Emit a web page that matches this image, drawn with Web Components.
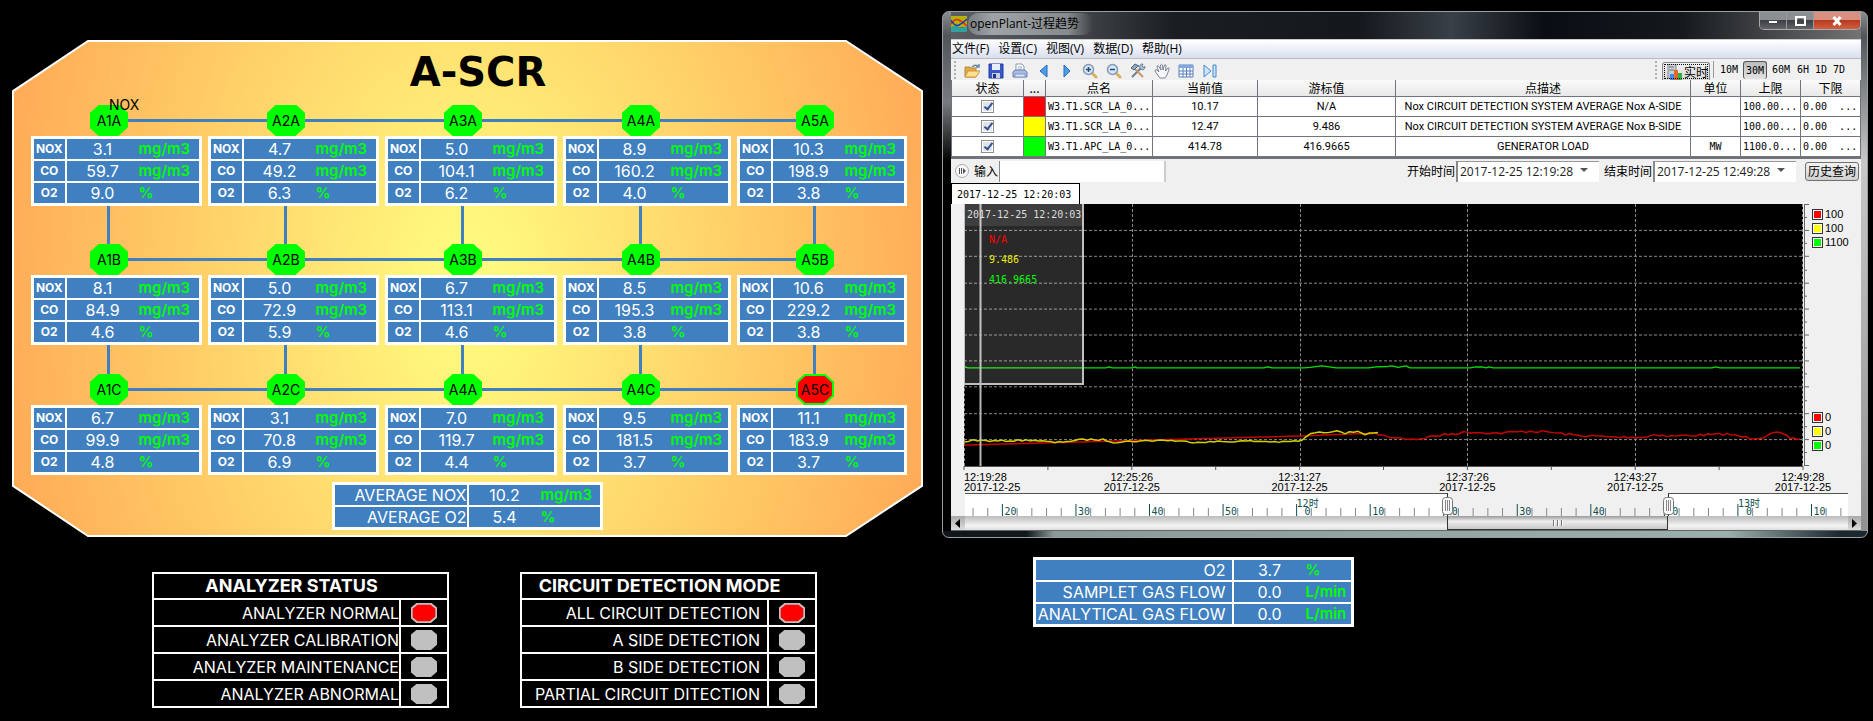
<!DOCTYPE html>
<html lang="zh-CN">
<head>
<meta charset="utf-8">
<title>A-SCR</title>
<style>
html, body { margin: 0; background: #000; }
body { min-height: 100vh; font-family: "Liberation Sans", "Noto Sans CJK SC", sans-serif; }
</style>
</head>
<body>
<scr-dashboard></scr-dashboard>

<script>
const define = (name, html, setup) => {
  const tpl = document.createElement('template');
  tpl.innerHTML = html;
  customElements.define(name, class extends HTMLElement {
    constructor() {
      super();
      this.attachShadow({ mode: 'open' }).append(tpl.content.cloneNode(true));
    }
    connectedCallback() {
      if (setup && !this.ready) { this.ready = true; setup(this, this.shadowRoot); }
    }
  });
};

/* Blue table of label / value / unit rows; rows="label|value|unit;..." */
define('reading-table', `
<style>
:host { display: block; --label: 33px; --value: 73px; --pad: 0px; --label-font: bold 12px Inter, sans-serif; --align: center; --row: 20px; }
table { width: 100%; border-collapse: collapse; table-layout: fixed; background: #4080c0; border: 3px solid #fff; color: #fff; font: 16px/20px Inter, sans-serif; }
col.l { width: var(--label); } col.v { width: var(--value); }
tr + tr { border-top: 2px solid #fff; }
th, td { padding: 0; height: var(--row); white-space: nowrap; }
th { font: var(--label-font); line-height: 20px; text-align: var(--align); padding-right: var(--pad); border-right: 2px solid #fff; }
.v { text-align: center; }
.u { text-align: left; color: #0f0; font-weight: 600; font-size: 15px; }
</style>
<table><colgroup><col class="l"><col class="v"><col></colgroup><tbody></tbody></table>`,
(el, root) => {
  root.querySelector('tbody').innerHTML = el.getAttribute('rows').split(';').map(r => {
    const [l, v, u] = r.split('|');
    return `<tr><th scope="row">${l}</th><td class="v">${v}</td><td class="u">${u}</td></tr>`;
  }).join('');
});

/* Octagonal marker: sampling point or lamp */
define('octagon-mark', `
<style>
:host { display: block; position: relative; }
svg { position: absolute; inset: 0; width: 100%; height: 100%; }
span { position: relative; display: block; text-align: center; }
polygon { fill: var(--fill); stroke: var(--edge, var(--fill)); stroke-width: 2; vector-effect: non-scaling-stroke; }
</style>
<svg viewBox="0 0 38 30" preserveAspectRatio="none"><polygon points="9,1 29,1 37,8 37,21 28,29 9,29 1,22 1,8"/></svg>
<span><slot></slot></span>`);

define('sample-station', `
<style>
:host { display: block; position: relative; }
.across, .down { position: absolute; background: #4080c0; }
.across { left: 78px; right: -84px; top: 14px; height: 3px; }
:host([last]) .across { display: none; }
.down { left: 76px; width: 3px; top: 16px; bottom: calc(-1 * var(--drop, 0px)); }
octagon-mark { width: 38px; margin-left: 59px; height: 31px; --fill: #0f0; font: 14px/31px Inter, sans-serif; color: #000; }
:host([alarm]) octagon-mark { --fill: #f00; --edge: #0f0; }
reading-table { position: relative; }
</style>
<div class="across"></div><div class="down"></div>
<octagon-mark><slot></slot></octagon-mark>`,
(el, root) => {
  const table = document.createElement('reading-table');
  table.setAttribute('rows', el.getAttribute('rows'));
  root.append(table);
});

define('scr-panel', `
<style>
:host { display: block; position: relative; padding: 12px 16px 7px 19px; }
.bg { position: absolute; inset: 0; width: 100%; height: 100%; }
h1 { position: relative; margin: 0 0 13px; padding-left: 18px; text-align: center; font: bold 40px/40px "DejaVu Sans", sans-serif; color: #000; }
.row { position: relative; display: grid; grid-template-columns: 171fr 171fr 172fr 168fr 170fr; column-gap: 6px; }
.row + .row { margin-top: 38px; }
.row + .row.third { margin-top: 29px; }
.first { --drop: 38px; } .second { --drop: 29px; }
.tag { position: absolute; left: 97px; top: 56px; font: 14px/18px Inter, sans-serif; }
.avg { position: relative; width: 271px; margin: 7px 304px 0 auto; --label: 134px; --pad: 0px; --label-font: 16px Inter, sans-serif; --align: right; --row: 20px; }
</style>
<svg class="bg" viewBox="0 0 911 496" preserveAspectRatio="none">
<defs><radialGradient id="g" gradientUnits="userSpaceOnUse" cx="0" cy="0" r="490" gradientTransform="translate(455 248) scale(1 1.5)">
<stop offset="0" stop-color="#ffff80"/><stop offset="1" stop-color="#ffa855"/></radialGradient></defs>
<polygon points="76,1 834,1 910,51 910,445 834,495 76,495 1,445 1,51" fill="url(#g)" stroke="#fff" stroke-width="2" vector-effect="non-scaling-stroke"/>
</svg>
<h1>A-SCR</h1>
<div class="row first"></div><div class="row second"></div><div class="row third"></div>
<div class="tag">NOX</div>
<reading-table class="avg" rows="AVERAGE NOX|10.2|mg/m3;AVERAGE O2|5.4|%"></reading-table>`,
(el, root) => {
  const data = [
    [['A1A', 3.1, 59.7, 9.0], ['A2A', 4.7, 49.2, 6.3], ['A3A', 5.0, 104.1, 6.2], ['A4A', 8.9, 160.2, 4.0], ['A5A', 10.3, 198.9, 3.8]],
    [['A1B', 8.1, 84.9, 4.6], ['A2B', 5.0, 72.9, 5.9], ['A3B', 6.7, 113.1, 4.6], ['A4B', 8.5, 195.3, 3.8], ['A5B', 10.6, 229.2, 3.8]],
    [['A1C', 6.7, 99.9, 4.8], ['A2C', 3.1, 70.8, 6.9], ['A4A', 7.0, 119.7, 4.4], ['A4C', 9.5, 181.5, 3.7], ['A5C', 11.1, 183.9, 3.7]]];
  root.querySelectorAll('.row').forEach((row, i) => {
    row.innerHTML = data[i].map(([n, a, b, c], j) =>
      `<sample-station ${j === 4 ? 'last' : ''} ${n === 'A5C' ? 'alarm' : ''} rows="NOX|${a.toFixed(1)}|mg/m3;CO|${b.toFixed(1)}|mg/m3;O2|${c.toFixed(1)}|%">${n}</sample-station>`).join('');
  });
});

define('status-table', `
<style>
:host { display: block; width: 297px; }
table { width: 100%; border-collapse: collapse; table-layout: fixed; border: 2px solid #fff; color: #fff; font: 16px/20px Inter, sans-serif; }
col.m { width: 48px; }
tr { border-bottom: 2px solid #fff; }
th, td { height: 25px; padding: 0; white-space: nowrap; }
thead th { font-size: 18px; font-weight: 700; text-align: center; padding-right: 18px; height: 24px; }
tbody th { font-weight: 400; text-align: right; padding-right: var(--pad, 0px); border-right: 2px solid #fff; }
octagon-mark { width: 26px; height: 20px; margin: 0 auto; --fill: #c0c0c0; }
octagon-mark[on] { --fill: #f00; --edge: #c0c0c0; }
</style>
<table><colgroup><col><col class="m"></colgroup><thead><tr><th colspan="2"></th></tr></thead><tbody></tbody></table>`,
(el, root) => {
  root.querySelector('thead th').textContent = el.getAttribute('heading');
  root.querySelector('tbody').innerHTML = el.getAttribute('items').split(';').map((t, i) =>
    `<tr><th scope="row">${t}</th><td><octagon-mark ${i ? '' : 'on'}></octagon-mark></td></tr>`).join('');
});

define('trend-toolbar', `
<style>
:host { display: flex; align-items: center; height: 21px; background: #f0f0f0; padding-left: 3px; overflow: hidden; }
.grip { width: 2px; height: 18px; background: repeating-linear-gradient(#b0b0b0 0 2px, transparent 2px 4px); margin-right: 8px; }
button { border: 0; padding: 0; margin: 0 8px 0 0; width: 16px; height: 18px; background: none; flex: none; }
button.n { width: 15px; }
svg { display: block; width: 16px; height: 16px; margin-top: 2px; }
.right { margin-left: auto; display: flex; align-items: center; padding-right: 12px; }
.right .grip { margin-right: 5px; }
.live { display: flex; align-items: center; width: 48px; height: 19px; margin: 3px 3px 0 0; border: 1px solid #888; border-bottom: 0; border-radius: 3px 3px 0 0; background: linear-gradient(#f4f4f4, #d4d4d4); outline: 1px dotted #000; outline-offset: -3px; font: 12px/18px "Noto Sans CJK SC", sans-serif; padding-left: 3px; gap: 2px; white-space: nowrap; color: #000; }
.live svg { margin: 0; flex: none; }
.range { width: 24px; height: 18px; margin: 1px 2px 0 0; font: 10px/18px "DejaVu Sans Mono", monospace; color: #000; }
.range.s { width: 16px; }
.range.on { border: 1px solid #555; border-bottom: 0; border-radius: 3px; background: linear-gradient(#bbb, #e4e4e4); }
.bar { width: 1px; height: 17px; background: #999; margin-right: 3px; }
</style>
<div class="grip"></div>
<button aria-label="打开"><svg viewBox="0 0 16 16"><path d="M1 4h5l1 1h5v9H1z" fill="#e0a848" stroke="#b88838"/><path d="M4 8h12l-4 6H1z" fill="#ffe090" stroke="#c89840"/><path d="M8 4q3-3 6-1M15 1v3h-3" fill="none" stroke="#6888a8" stroke-width="1.500"/></svg></button>
<button aria-label="保存"><svg viewBox="0 0 16 16"><path d="M1 1h14v14H1z" fill="#3858c8" stroke="#2038a0"/><path d="M4 1h8v6H4z" fill="#e8eeff"/><path d="M4 10h8v5H4z" fill="#c8d0e0"/><path d="M5 11h3v4H5z" fill="#203080"/></svg></button>
<button aria-label="打印"><svg viewBox="0 0 16 16"><path d="M4 1h6l2 2v5H4z" fill="#fff" stroke="#8898b8"/><path d="M6 4h4M6 6h4" stroke="#90a8d0"/><path d="M1 9l2-2h10l2 2v5H1z" fill="#a8bce0" stroke="#6880b0"/><path d="M3 11h10v3H3z" fill="#d8e4fa" stroke="#8098c8"/></svg></button>
<button class="n" aria-label="后退"><svg viewBox="0 0 16 16"><path d="M11 2v12L4 8z" fill="#4c9ee8" stroke="#2868c0"/></svg></button>
<button class="n" aria-label="前进"><svg viewBox="0 0 16 16"><path d="M5 2v12l6-6z" fill="#4c9ee8" stroke="#2868c0"/></svg></button>
<button aria-label="放大"><svg viewBox="0 0 16 16"><path d="M10 10l4 4" stroke="#d8b060" stroke-width="3" stroke-linecap="round"/><circle cx="6.500" cy="6.500" r="5" fill="#d0e8ff" stroke="#8898b0" stroke-width="1.500"/><path d="M4 6.500h5M6.500 4v5" stroke="#304870" stroke-width="1.500"/></svg></button>
<button aria-label="缩小"><svg viewBox="0 0 16 16"><path d="M10 10l4 4" stroke="#d8b060" stroke-width="3" stroke-linecap="round"/><circle cx="6.500" cy="6.500" r="5" fill="#d0e8ff" stroke="#8898b0" stroke-width="1.500"/><path d="M4 6.500h5" stroke="#304870" stroke-width="1.500"/></svg></button>
<button aria-label="工具"><svg viewBox="0 0 16 16"><path d="M2 14L12 4" stroke="#6a8098" stroke-width="2"/><path d="M4 5l9 9" stroke="#c89868" stroke-width="2"/><path d="M1 5l4-4 4 2-2 1-3 3z" fill="#90a8c0" stroke="#506880"/><path d="M10 5q-1-4 3-4l-1 2 1 1.500 2-1q0 4-4 3z" fill="#b8cce0" stroke="#506880" stroke-width=".8"/></svg></button>
<button aria-label="平移"><svg viewBox="0 0 16 16"><path d="M5 14L1 8q0-2 2-1l2 2L3 4q0-2 1.500-1L7 7 6.500 2q1-1.500 2 0L9 7l1.500-5q1.500-1 1.500 1L11.500 8 14 5q1.500-.5 1 1.500L13 12l-2 3H6z" fill="#f8f8fc" stroke="#707890" stroke-width=".9"/></svg></button>
<button aria-label="表格"><svg viewBox="0 0 16 16"><path d="M1 2h14v12H1z" fill="#fff" stroke="#5880b8"/><path d="M1 2h14v3H1z" fill="#80a8e0"/><path d="M1 8h14M1 11h14M5 5v9M8.500 5v9M12 5v9" stroke="#5880c0"/></svg></button>
<button aria-label="末尾"><svg viewBox="0 0 16 16"><path d="M2 2v12l7-6z" fill="#c8e4ff" stroke="#4888c8"/><path d="M11 2h3v12h-3z" fill="#c8e4ff" stroke="#4888c8"/></svg></button>
<div class="right">
<div class="grip"></div>
<button class="live"><svg viewBox="0 0 16 16"><path d="M2 0h8v14H2z" fill="#c8ccd4" stroke="#888"/><path d="M3 3h5M3 6h5" stroke="#777"/><path d="M4 10h4v6H4z" fill="#3c8ce8"/><path d="M8 6h4v10H8z" fill="#e86828"/><path d="M12 9h4v7h-4z" fill="#30b040"/></svg>实时</button>
<div class="bar"></div>
<button class="range">10M</button><button class="range on">30M</button><button class="range">60M</button><button class="range s">6H</button><button class="range s">1D</button><button class="range s">7D</button>
</div>`);

define('point-grid', `
<style>
:host { display: block; background: #fff; border-bottom: 2px solid #707478; }
table { width: 100%; table-layout: fixed; border-collapse: collapse; font: 11px/18px Roboto, sans-serif; color: #000; }
th, td { padding: 0; border: 1px solid #70747c; text-align: center; white-space: nowrap; overflow: hidden; height: 19px; line-height: 18px; }
th { height: 16px; line-height: 16px; border-top: 0; background: linear-gradient(#fafafa, #e8e8e8); font: 12px/16px "Noto Sans CJK SC", sans-serif; }
.m { font: 10px/18px "DejaVu Sans Mono", monospace; text-align: left; padding-left: 2px; }
td.u { text-align: center; padding: 0; }
td.c { background: var(--c); }
pre { margin: 0; font: inherit; }
input { appearance: none; display: block; position: relative; width: 13px; height: 13px; margin: 0 auto; border: 1px solid #8e8f8f; box-shadow: inset 0 0 0 1px #fff; background: #dfe4ea; }
input:checked::before { content: ""; position: absolute; left: 4px; top: 0; width: 3px; height: 7px; border: solid #39508c; border-width: 0 2px 2px 0; transform: rotate(38deg); }
</style>
<table><colgroup><col style="width:72px"><col style="width:22px"><col style="width:107px"><col style="width:105px"><col style="width:138px"><col><col style="width:50px"><col style="width:60px"><col style="width:60px"></colgroup>
<thead><tr><th>状态</th><th>...</th><th>点名</th><th>当前值</th><th>游标值</th><th>点描述</th><th>单位</th><th>上限</th><th>下限</th></tr></thead><tbody></tbody></table>`,
(el, root) => {
  root.querySelector('tbody').innerHTML = [
    ['#f00', 'W3.T1.SCR_LA_0...', '10.17', 'N/A', 'Nox CIRCUIT DETECTION SYSTEM AVERAGE Nox A-SIDE', '', '100.00...'],
    ['#ff0', 'W3.T1.SCR_LA_0...', '12.47', '9.486', 'Nox CIRCUIT DETECTION SYSTEM AVERAGE Nox B-SIDE', '', '100.00...'],
    ['#0f0', 'W3.T1.APC_LA_0...', '414.78', '416.9665', 'GENERATOR LOAD', 'MW', '1100.0...']
  ].map(r => `<tr><td><input type="checkbox" checked aria-label="${r[1]}"></td><td class="c" style="--c:${r[0]}"></td><td class="m">${r[1]}</td><td>${r[2]}</td><td>${r[3]}</td><td>${r[4]}</td><td class="m u">${r[5]}</td><td class="m">${r[6]}</td><td class="m"><pre>0.00  ...</pre></td></tr>`).join('');
});

define('query-bar', `
<style>
:host { display: flex; align-items: center; height: 24px; background: #f0f0f0; font: 12px/20px "Noto Sans CJK SC", sans-serif; color: #000; padding: 0 2px 0 3px; }
.go { width: 14px; height: 14px; padding: 0; border: 0; background: none; margin: 0 5px 0 1px; }
svg { display: block; }
input { box-sizing: border-box; height: 21px; border: 0; border-left: 1px solid #888; background: #fff; font: 12px/20px "Open Sans", sans-serif; color: #222; padding: 0 0 0 2px; border-radius: 0; }
.free { width: 167px; margin-left: 1px; border-right: 2px solid #ccc; }
.start { margin-left: auto; }
.dt { width: 143px; margin: 0 5px 0 1px; position: relative; display: flex; align-items: center; background: #fff; box-shadow: inset 0 1px #999; }
.dt input { width: 122px; border-left: 2px solid #888; background: none; }
.dt button { border: 0; padding: 0; width: 12px; height: 12px; background: none; }
.q { box-sizing: border-box; width: 54px; height: 19px; padding: 0; margin-left: 4px; border: 1px solid #707070; border-radius: 3px; background: linear-gradient(#f2f2f2, #cfcfcf); font: inherit; line-height: 16px; color: #000; }
label { white-space: nowrap; }
</style>
<button class="go" aria-label="执行"><svg width="14" height="14" viewBox="0 0 14 14"><circle cx="7" cy="7" r="6.500" fill="#f8f8f8" stroke="#aaa"/><path d="M4 4h1v6H4zM6 4h1v6H6zM8 4l3 3-3 3z" fill="#555"/></svg></button>
<label for="f">输入</label><input class="free" id="f">
<label class="start" for="s">开始时间</label><div class="dt"><input id="s" value="2017-12-25 12:19:28"><button aria-label="选择开始时间"><svg width="12" height="12" viewBox="0 0 12 12"><path d="M2 3h8L6 7z" fill="#555"/></svg></button></div>
<label for="e">结束时间</label><div class="dt"><input id="e" value="2017-12-25 12:49:28"><button aria-label="选择结束时间"><svg width="12" height="12" viewBox="0 0 12 12"><path d="M2 3h8L6 7z" fill="#555"/></svg></button></div>
<button class="q">历史查询</button>`);

define('trend-chart', `
<style>
:host { display: block; background: #f0f0f0; color: #000; }
.tab { box-sizing: border-box; width: 129px; height: 21px; border: 1px solid #000; border-bottom: 0; background: #fff; font: 10px/21px "DejaVu Sans Mono", monospace; padding-left: 5px; white-space: nowrap; }
.plot { display: grid; grid-template-columns: 13px 1fr 58px; }
.area { position: relative; grid-column: 2; height: 262px; background: #000; }
.area > svg { display: block; width: 100%; height: 100%; }
.tip { position: absolute; left: 0; top: 0; box-sizing: border-box; width: 120px; height: 181px; border: solid #c0c0c0; border-width: 0 2px 2px 1px; background: rgba(255,255,255,.16); font: 10px/20px "DejaVu Sans Mono", monospace; white-space: nowrap; }
.tip h2 { margin: 0 0 4px; font: inherit; line-height: 22px; padding-left: 2px; color: #ddd; background: rgba(255,255,255,.1); }
.tip div { padding-left: 24px; }
.side { position: relative; display: flex; flex-direction: column; justify-content: space-between; padding: 3px 0 14px 9px; }
.side svg { position: absolute; left: 0; top: 0; height: 100%; width: 6px; }
ul { list-style: none; margin: 0; padding: 0; font: 11px/14px "Liberation Sans", sans-serif; }
li { display: flex; align-items: center; gap: 2px; }
i { box-sizing: border-box; width: 11px; height: 11px; border: 1px solid #333; box-shadow: inset 0 0 0 1px #fff; background: var(--c); }
.axis { padding: 0 58px 0 13px; }
.axis svg { display: block; width: 100%; height: 27px; overflow: visible; }
.ruler { display: grid; grid-template-columns: 14px 1fr 13px; }
.strip { position: relative; height: 23px; display: grid; grid-template-columns: 482fr 221fr 180fr; }
.strip b { background: #fff; border-top: 1px solid #555; }
.strip b:nth-of-type(2) { background: #f0f0f0; border-color: transparent; }
.strip > svg { position: absolute; inset: 0; width: 100%; height: 100%; overflow: visible; }
.scroll { position: relative; grid-column: 1 / -1; height: 14px; display: grid; grid-template-columns: 14px 482fr 221fr 180fr 13px; background: linear-gradient(#bbb, #f4f4f4 70%, #ddd); border-bottom: 1px solid #666; }
.scroll button { border: 0; padding: 0; background: linear-gradient(#aaa, #ddd); }
.thumb { border: solid #333; border-width: 0 1px 1px; background: linear-gradient(#999, #eee 40%, #c8c8c8); display: flex; justify-content: center; gap: 3px; align-items: center; }
.thumb span { width: 1px; height: 6px; background: #777; box-shadow: 1px 0 #fff; }
.scroll svg { display: block; }
</style>
<div class="tab">2017-12-25 12:20:03</div>
<div class="plot">
 <div class="area"><svg viewBox="0 0 839 263" preserveAspectRatio="none"><g id="grid" stroke="#8c8c8c" stroke-dasharray="3 2"></g><g id="lines" fill="none" stroke-width="1.500" stroke-linejoin="round"></g><path d="M16.500 0V263" stroke="#b8b8b8" stroke-width="2"/></svg>
  <div class="tip"><h2>2017-12-25 12:20:03</h2><div style="color:#f00">N/A</div><div style="color:#e8e800">9.486</div><div style="color:#0f0">416.9665</div></div></div>
 <div class="side"><svg viewBox="0 0 6 263" preserveAspectRatio="none"><path id="yt" fill="none" stroke="#666"/></svg>
  <ul><li style="--c:#f00"><i></i>100</li><li style="--c:#ff0"><i></i>100</li><li style="--c:#0f0"><i></i>1100</li></ul>
  <ul><li style="--c:#f00"><i></i>0</li><li style="--c:#ff0"><i></i>0</li><li style="--c:#0f0"><i></i>0</li></ul></div>
</div>
<div class="axis"><svg id="times" font-family="Liberation Sans, sans-serif" font-size="11"></svg></div>
<div class="ruler"><div></div><div class="strip"><b></b><b></b><b></b><svg id="rule" font-family="DejaVu Sans Mono, monospace" font-size="10"></svg></div><div></div>
<div class="scroll"><button aria-label="向左"><svg width="14" height="13" viewBox="0 0 14 13"><path d="M9 2v9L4 6.500z"/></svg></button><div></div><div class="thumb"><span></span><span></span><span></span></div><div></div><button aria-label="向右"><svg width="13" height="13" viewBox="0 0 13 13"><path d="M4 2v9l5-4.500z"/></svg></button></div></div>`,
(el, root) => {
  let seed = 7;
  const rnd = () => (seed = (seed * 16807) % 2147483647) / 2147483647 - .5;
  let g = '';
  for (let i = 0; i <= 5; i++) g += `<path d="M${Math.min(838.5, Math.round(i * 167.8) + .5)} 0V263"/>`;
  for (let i = 1; i < 10; i++) g += `<path d="M0 ${Math.round(i * 26.2) + .5}H839"/>`;
  root.querySelector('#grid').innerHTML = g;
  // Expands key points into a path with small measurement noise.
  const trace = (pts, amp, from = 0) => {
    let d = `M${pts[0]}`;
    for (let k = 1; k < pts.length; k++) {
      const [x0, y0] = pts[k - 1], [x1, y1] = pts[k], n = Math.max(1, Math.round((x1 - x0) / 4));
      for (let j = 1; j <= n; j++) {
        const x = x0 + (x1 - x0) * j / n;
        d += `L${x.toFixed(1)} ${(y0 + (y1 - y0) * j / n + (x > from ? rnd() * amp : 0)).toFixed(1)}`;
      }
    }
    return d;
  };
  const red = trace([[0,242],[343,232.7],[395,230.5],[415,231],[423,234],[436,235],[453,236],[469,233],[503,229],[533,230],[566,228],[586,229],[609,232],[649,234],[683,234],[690,231],[703,233],[736,232],[763,231],[786,235],[799,234],[806,230],[816,230],[826,235],[836,236]], 2.4, 410);
  const yellow = trace([[0,239],[9,237],[30,238],[50,237.5],[70,237],[91,239.5],[119,236.5],[139,236.5],[149,239],[200,237],[230,239],[290,238],[319,239],[338,237.5],[347,230],[364,229],[373,227],[381,230],[394,228],[401,231],[414,230]], 1.6);
  const green = 'M0 163L4 164.500H142L145 163.500L148 164.500H168L171 163.500L173 164.500H300L303 163.500L308 164.500H340L346 164L358 162.500L372 164.500H405L412 163.500L424 163L428 162.500L434 164L442 162.500L446 164.500H506L512 163.500H518L522 164.500L525 163.500L529 164.500H748L752 163.500L756 164.500H836';
  root.querySelector('#lines').innerHTML = `<path d="${red}" stroke="#c80000"/><path d="${yellow}" stroke="#d0d000"/><path d="${green}" stroke="#00e000"/>`;
  let yt = 'M1.500 0V263';
  for (let i = 0; i <= 20; i++) yt += `M1 ${Math.min(262.5, Math.round(i * 13.1) + .5)}h${i % 2 ? 3 : 5}`;
  root.querySelector('#yt').setAttribute('d', yt);
  let t = '<line x2="100%" y1=".5" y2=".5" stroke="#555"/>';
  ['12:19:28', '12:25:26', '12:31:27', '12:37:26', '12:43:27', '12:49:28'].forEach((s, i) => {
    const a = i ? 'middle' : 'start';
    t += `<text x="${i * 20}%" y="15" text-anchor="${a}">${s}</text><text x="${i * 20}%" y="25" text-anchor="${a}">2017-12-25</text>`;
  });
  for (let i = 0; i <= 10; i++) t += `<line x1="${i * 10}%" x2="${i * 10}%" y1="0" y2="4" stroke="#555"/>`;
  root.querySelector('#times').innerHTML = t;
  const pc = x => (x / 8.83).toFixed(3) + '%';
  let r = '';
  for (let i = 0; i < 60; i++) {
    const x = 8 + i * 14.71;
    if (x > 880) break;
    const major = i % 5 === 2;
    r += `<line x1="${pc(x)}" x2="${pc(x)}" y1="${major ? 11 : 15}" y2="23" stroke="${major ? '#105050' : '#888'}"/>`;
  }
  ['20', '30', '40', '50', '0', '10', '20', '30', '40', '50', '0', '10'].forEach((s, i) => {
    const x = 37.4 + i * 73.55;
    r += `<text x="${pc(x + (s === '0' ? 8 : 2))}" y="22" fill="#105050">${s}</text>`;
    if (s === '0') r += `<text x="${pc(x)}" y="14" fill="#105050" font-family="DejaVu Sans Mono, Noto Sans CJK SC, monospace">${i === 4 ? 12 : 13}时</text>`;
  });
  for (const x of [482, 703]) r += `<svg x="${pc(x)}" overflow="visible"><path d="M.5 0V23" stroke="#333"/><rect x="-4.500" y="4.500" width="10" height="17" rx="3" fill="#fafafa" stroke="#777"/><path d="M-1.500 7v11M.5 7v11M2.500 7v11" stroke="#888"/></svg>`;
  root.querySelector('#rule').innerHTML = r;
});

define('trend-window', `
<style>
:host { display: block; border: 1px solid #9a9ea2; border-radius: 7px; padding: 0 6px 6px 8px; background:
  linear-gradient(90deg, #10161c 0, #10161c 9%, #8a9a98 12%, #9ab0ac 85%, #1c2830 97%) bottom / 100% 6px no-repeat,
  linear-gradient(#8a8d90 0, #50555a 24px, #787c80 90px, #000 150px) left / 8px 100% no-repeat,
  linear-gradient(#8a8d90 0, #50555a 24px, #c8c8c8 150px, #909090) right / 6px 100% no-repeat,
  linear-gradient(90deg, #5c6064, #404448 15%, #1a1e22 25%, #14181d 45%, #3a4048 55%, #0a0e14 65%, #15191d 80%, #777 100%); }
header { display: flex; height: 27px; align-items: flex-start; }
header svg.logo { margin-top: 4px; margin-right: 1px; }
h2 { margin: 1px 0 0; padding: 0 14px 0 2px; font: 12px/22px "Open Sans", "Noto Sans CJK SC", sans-serif; color: #000; background: linear-gradient(90deg, rgba(200,205,208,.3), rgba(200,205,208,.65) 20%, rgba(200,205,208,.5) 80%, transparent); border-radius: 10px; white-space: nowrap; }
.btns { margin-left: auto; display: flex; border: 1px solid #aaa; border-top: 0; border-radius: 0 0 5px 5px; overflow: hidden; height: 17px; }
.btns button { width: 27px; padding: 0; border: 0; border-right: 1px solid #999; background: linear-gradient(#8c8f92 45%, #3c4044 50%, #606468); }
.btns button:last-child { width: 46px; border: 0; background: linear-gradient(#d89080 45%, #b83820 50%, #d06040); }
.btns svg { display: block; margin: 0 auto; }
nav { height: 18px; display: flex; gap: 9px; padding-left: 1px; border-bottom: 1px solid #bbb; background: linear-gradient(#fff, #f0f2fa 40%, #d8dff0); border-top: 1px solid #ccc; }
nav button { border: 0; padding: 0; background: none; font: 12px/18px "Open Sans", "Noto Sans CJK SC", sans-serif; color: #000; white-space: nowrap; }
</style>
<header><svg class="logo" width="16" height="16" viewBox="0 0 16 16"><path d="M0 0h16v11H0z" fill="#b8b000"/><path d="M0 11q5-2 8 0t8-1v6H0z" fill="#30a0a0"/><path d="M0 8q4-6 8-4t8 6" stroke="#e03010" fill="none" stroke-width="1.500"/><path d="M0 4q4 7 8 5t8-6" stroke="#1838c0" fill="none" stroke-width="1.500"/></svg>
<h2>openPlant-过程趋势</h2>
<div class="btns"><button aria-label="最小化"><svg width="12" height="12" viewBox="0 0 12 12"><path d="M1.500 5.500h9v3h-9z" fill="#fff" stroke="#444"/></svg></button><button aria-label="最大化"><svg width="12" height="12" viewBox="0 0 12 12"><path d="M2 2h9v8H2z" fill="none" stroke="#fff" stroke-width="2"/><path d="M4 4h5v4H4z" fill="#444"/></svg></button><button aria-label="关闭"><svg width="12" height="12" viewBox="0 0 12 12"><path d="M2.500 2l7 8M9.500 2l-7 8" stroke="#fff" stroke-width="3"/></svg></button></div></header>
<nav><button>文件(F)</button><button>设置(C)</button><button>视图(V)</button><button>数据(D)</button><button>帮助(H)</button></nav>
<trend-toolbar></trend-toolbar>
<point-grid></point-grid>
<query-bar></query-bar>
<trend-chart></trend-chart>`);

define('scr-dashboard', `
<style>
:host { display: grid; grid-template-columns: 942fr 931fr; align-items: start; }
.left { padding: 40px 19px 0 12px; }
.status { display: flex; gap: 71px; margin: 35px 0 0 140px; }
.right { padding: 11px 5px 0 0; }
.gas { width: 321px; margin: 19px 0 0 91px; --label: 198px; --pad: 6px; --align: right; --label-font: 16px Inter, sans-serif; }
.side { --pad: 7px; }
</style>
<main class="left"><scr-panel></scr-panel>
<div class="status"><status-table heading="ANALYZER STATUS" items="ANALYZER NORMAL;ANALYZER CALIBRATION;ANALYZER MAINTENANCE;ANALYZER ABNORMAL"></status-table>
<status-table class="side" heading="CIRCUIT DETECTION MODE" items="ALL CIRCUIT DETECTION;A SIDE DETECTION;B SIDE DETECTION;PARTIAL CIRCUIT DITECTION"></status-table></div></main>
<aside class="right"><trend-window></trend-window>
<reading-table class="gas" rows="O2|3.7|%;SAMPLET GAS FLOW|0.0|L/min;ANALYTICAL GAS FLOW|0.0|L/min"></reading-table></aside>`);
</script>
</body>
</html>
